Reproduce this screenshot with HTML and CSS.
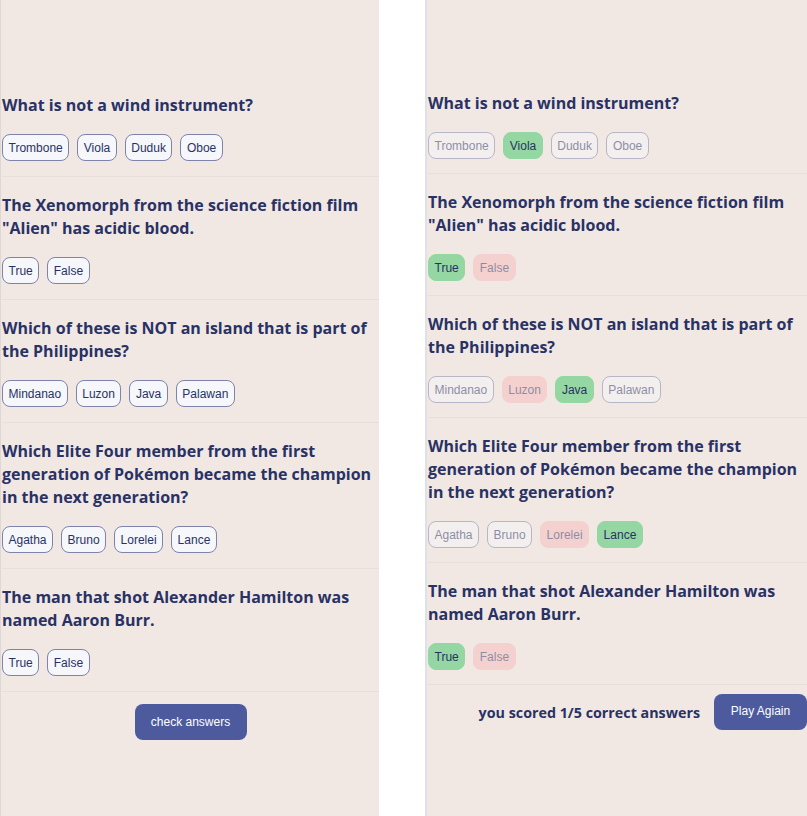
FILE: index.html
```html
<!DOCTYPE html>
<html lang="en">
<head>
<meta charset="utf-8">
<title>Quizzical</title>
<link rel="stylesheet" href="styles.css">
</head>
<body>
<div class="page">
  <section class="panel panel-quiz">
    <div class="question">
      <h2 class="q-title">What is not a wind instrument?</h2>
      <div class="answers">
        <button class="ans">Trombone</button>
        <button class="ans">Viola</button>
        <button class="ans">Duduk</button>
        <button class="ans">Oboe</button>
      </div>
    </div>
    <div class="question">
      <h2 class="q-title">The Xenomorph from the science fiction film "Alien" has acidic blood.</h2>
      <div class="answers">
        <button class="ans">True</button>
        <button class="ans">False</button>
      </div>
    </div>
    <div class="question">
      <h2 class="q-title">Which of these is NOT an island that is part of the Philippines?</h2>
      <div class="answers">
        <button class="ans">Mindanao</button>
        <button class="ans">Luzon</button>
        <button class="ans">Java</button>
        <button class="ans">Palawan</button>
      </div>
    </div>
    <div class="question">
      <h2 class="q-title">Which Elite Four member from the first generation of Pokémon became the champion in the next generation?</h2>
      <div class="answers">
        <button class="ans">Agatha</button>
        <button class="ans">Bruno</button>
        <button class="ans">Lorelei</button>
        <button class="ans">Lance</button>
      </div>
    </div>
    <div class="question">
      <h2 class="q-title">The man that shot Alexander Hamilton was named Aaron Burr.</h2>
      <div class="answers">
        <button class="ans">True</button>
        <button class="ans">False</button>
      </div>
    </div>
    <div class="footer footer-center">
      <button class="primary check">check answers</button>
    </div>
  </section>

  <section class="panel panel-result">
    <div class="question">
      <h2 class="q-title">What is not a wind instrument?</h2>
      <div class="answers">
        <button class="ans faded">Trombone</button>
        <button class="ans correct">Viola</button>
        <button class="ans faded">Duduk</button>
        <button class="ans faded">Oboe</button>
      </div>
    </div>
    <div class="question">
      <h2 class="q-title">The Xenomorph from the science fiction film "Alien" has acidic blood.</h2>
      <div class="answers">
        <button class="ans correct">True</button>
        <button class="ans wrong">False</button>
      </div>
    </div>
    <div class="question">
      <h2 class="q-title">Which of these is NOT an island that is part of the Philippines?</h2>
      <div class="answers">
        <button class="ans faded">Mindanao</button>
        <button class="ans wrong">Luzon</button>
        <button class="ans correct">Java</button>
        <button class="ans faded">Palawan</button>
      </div>
    </div>
    <div class="question">
      <h2 class="q-title">Which Elite Four member from the first generation of Pokémon became the champion in the next generation?</h2>
      <div class="answers">
        <button class="ans faded">Agatha</button>
        <button class="ans faded">Bruno</button>
        <button class="ans wrong">Lorelei</button>
        <button class="ans correct">Lance</button>
      </div>
    </div>
    <div class="question">
      <h2 class="q-title">The man that shot Alexander Hamilton was named Aaron Burr.</h2>
      <div class="answers">
        <button class="ans correct">True</button>
        <button class="ans wrong">False</button>
      </div>
    </div>
    <div class="footer footer-score">
      <p class="score">you scored 1/5 correct answers</p>
      <button class="primary again">Play Agiain</button>
    </div>
  </section>
</div>
</body>
</html>
```
FILE: styles.css
```css
* { box-sizing: border-box; }

html, body {
  margin: 0;
  padding: 0;
  background: #ffffff;
}

body {
  font-family: "Open Sans", "Noto Sans", sans-serif;
  color: #293264;
}

.page {
  display: flex;
  gap: 46px;
  width: 807px;
  height: 816px;
  overflow: hidden;
}

.panel {
  background: #f1e8e4;
  height: 816px;
  display: flex;
  flex-direction: column;
}

.panel-quiz {
  width: 379px;
  flex: none;
  border-left: 1px solid #ddd8d7;
  padding: 77px 0 0 1px;
}

.panel-result {
  flex: 1;
  min-width: 0;
  border-left: 2px solid #dde1ea;
  padding: 75px 0 0 1px;
}

.question {
  padding: 17px 0 15px;
  border-bottom: 1px solid #e8dfdc;
}

.panel-result .question {
  padding-bottom: 14px;
}

.q-title {
  margin: 0;
  font-size: 16px;
  line-height: 23px;
  font-weight: 700;
  color: #293264;
}

.answers {
  display: flex;
  gap: 8px;
  margin-top: 17px;
}

.ans {
  font-family: "Liberation Sans", Arial, sans-serif;
  font-size: 12px;
  line-height: 14px;
  height: 27px;
  padding: 0 5.5px;
  border: 1px solid #7f83aa;
  border-radius: 8px;
  background: #f5f7fb;
  color: #293264;
  margin: 0;
}

.ans.faded {
  opacity: 0.5;
}

.ans.correct {
  background: #94d7a2;
  border-color: #94d7a2;
}

.ans.wrong {
  background: #f8bcbc;
  border-color: #f8bcbc;
  opacity: 0.5;
}

.footer {
  display: flex;
  align-items: center;
}

.footer-center {
  justify-content: center;
  padding-top: 12px;
}

.footer-score {
  justify-content: flex-end;
  gap: 14px;
  padding-top: 9px;
}

.primary {
  font-family: "Liberation Sans", Arial, sans-serif;
  font-size: 12px;
  color: #ffffff;
  background: #4d5b9e;
  border: none;
  border-radius: 8px;
  height: 36px;
  margin: 0;
}

.check {
  width: 112px;
}

.again {
  width: 93px;
  padding: 0 0 2px;
}

.score {
  margin: 0;
  font-size: 14.3px;
  font-weight: 700;
  color: #293264;
}
```
